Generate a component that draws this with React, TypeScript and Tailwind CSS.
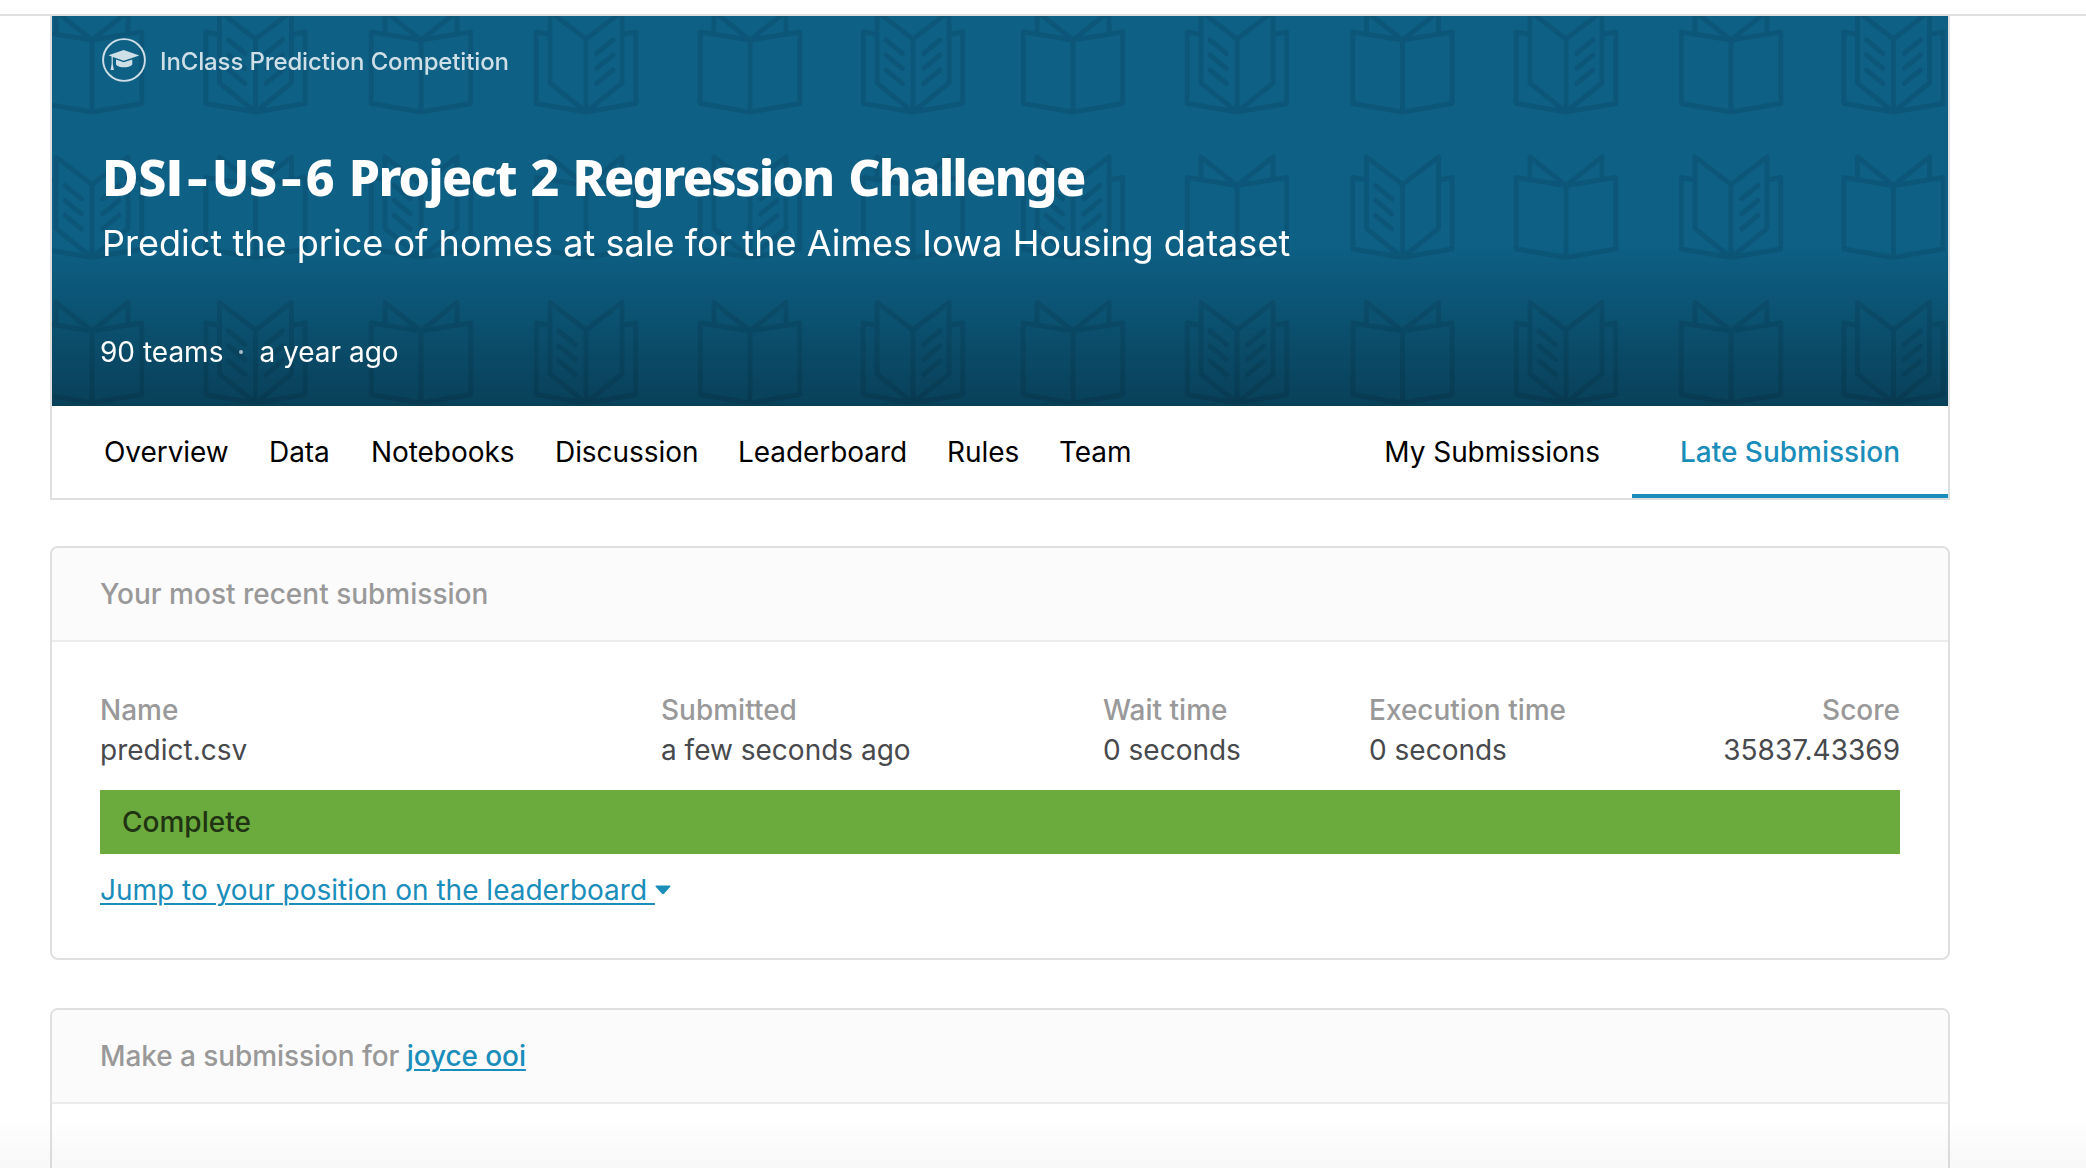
type BookKind = "closed" | "left" | "right" | "both";

const columns = [92, 255.5, 421, 586, 750, 913, 1073, 1237, 1402.5, 1566, 1731, 1893.5];

const rows: { bottom: number; kinds: BookKind[] }[] = [
  { bottom: 112, kinds: ["closed", "both", "closed", "right", "closed", "both", "closed", "left", "closed", "right", "closed", "both"] },
  { bottom: 257.5, kinds: ["both", "closed", "left", "closed", "right", "closed", "both", "closed", "left", "closed", "right", "closed"] },
  { bottom: 403, kinds: ["closed", "both", "closed", "left", "closed", "right", "closed", "both", "closed", "left", "closed", "right"] },
];

const CLOSED =
  "M-49.7 -80L0 -72L49.7 -80V-8.5L0 0L-49.7 -8.5ZM0 -72V0M-36 -78V-100.5L0 -72L36 -100.5V-78";
const OPEN =
  "M-36 -77.5L-49.7 -80V-8.5L0 0L49.7 -8.5V-80L36 -77.5M-36 -100.5L0 -73L36 -100.5V-29L0 0L-36 -29ZM0 -73V0";
const RIGHT_LINES = "M10.5 -58.5L27 -72M10.5 -43.5L27 -57M10.5 -28.5L27 -42";
const LEFT_LINES = "M-10.5 -58.5L-27 -72M-10.5 -43.5L-27 -57M-10.5 -28.5L-27 -42";

function BookPattern() {
  return (
    <svg className="absolute inset-0 h-full w-full" viewBox="52 16 1896 390" fill="none">
      <g stroke="#000" strokeWidth="5" strokeLinejoin="round" strokeLinecap="round" opacity="0.09">
        {rows.map((row) =>
          row.kinds.map((kind, i) => (
            <g key={`${row.bottom}-${i}`} transform={`translate(${columns[i]} ${row.bottom})`}>
              <path d={kind === "closed" ? CLOSED : OPEN} />
              {(kind === "left" || kind === "both") && <path d={LEFT_LINES} />}
              {(kind === "right" || kind === "both") && <path d={RIGHT_LINES} />}
            </g>
          )),
        )}
      </g>
    </svg>
  );
}

function InClassIcon() {
  return (
    <svg className="h-11 w-11" viewBox="0 0 44 44" fill="#cfdfe7">
      <circle cx="22" cy="22" r="20.9" fill="none" stroke="#cfdfe7" strokeWidth="1.9" />
      <path d="M6.5 17.3L21.7 12L37.3 17.4L21.7 22.7L10.8 19.1V26L11.9 32H8.6L9.6 26V18.4Z" />
      <path d="M14 21.6L21.7 24.3L30.3 21.6V26.4C28.5 28.6 25 29.3 22 29.3C19 29.3 15.8 28.6 14 26.4Z" />
    </svg>
  );
}

function Hyphen() {
  return <span className="inline-block w-[29px] scale-x-130 text-center tracking-normal">-</span>;
}

const tabs = [
  { label: "Overview", className: "w-[165px]" },
  { label: "Data", className: "w-[102px]" },
  { label: "Notebooks", className: "w-[184px]" },
  { label: "Discussion", className: "w-[183px]" },
  { label: "Leaderboard", className: "w-[209px]" },
  { label: "Rules", className: "w-[112px]" },
  { label: "Team", className: "w-[100px]" },
];

const details = [
  { label: "Name", value: "predict.csv", className: "w-[561px]" },
  { label: "Submitted", value: "a few seconds ago", className: "w-[442px]" },
  { label: "Wait time", value: "0 seconds", className: "w-[266px]" },
  { label: "Execution time", value: "0 seconds", className: "w-[300px]" },
  { label: "Score", value: "35837.43369", className: "ml-auto text-right" },
];

export default function App() {
  return (
    <div className="relative h-[1168px] w-[2086px] overflow-hidden bg-white font-['Inter',sans-serif] text-[28px] leading-10 whitespace-nowrap">
      <div className="h-4 border-b-2 border-[#dedfe0]" />
      <main className="ml-[50px] w-[1900px]">
        <section className="border-x-2 border-b-2 border-[#dedfe0]">
          <header className="relative h-[390px] overflow-hidden bg-[#0e6085]">
            <BookPattern />
            <div className="absolute inset-x-0 bottom-0 h-[160px] bg-linear-to-b from-transparent to-black/33" />
            <div className="relative flex h-full flex-col pt-[22px] pl-[50px] text-white">
              <div className="flex h-11 items-center gap-[14px] text-2xl text-[#cfdfe7]">
                <InClassIcon />
                <span className="pt-[3px] font-[450] tracking-[-0.13px]">InClass Prediction Competition</span>
              </div>
              <h1 className="mt-[63px] h-16 font-['Noto_Sans',sans-serif] text-[50px] leading-[64px] font-extrabold tracking-[-1.75px] [word-spacing:3.5px]">
                <span className="tracking-[-0.5px]">
                  DS<span className="font-['Open_Sans',sans-serif]">I</span>
                  <Hyphen />US<Hyphen />6
                </span>{" "}
                Project 2 Regression Challenge
              </h1>
              <p className="mt-[10px] text-[36px] leading-[48px] font-[420] tracking-[0.03px]">
                Predict the price of homes at sale for the Aimes Iowa Housing dataset
              </p>
              <div className="mt-[65px] -ml-0.5 flex items-center font-[420]">
                <span>90 teams</span>
                <span className="ml-4 h-1 w-1 rounded-full bg-[#a7bdc9]" />
                <span className="ml-4">a year ago</span>
              </div>
            </div>
          </header>
          <nav className="flex h-[92px] items-stretch pl-[52px] tracking-[-0.06px] text-black">
            {tabs.map((tab) => (
              <a key={tab.label} className={`flex items-center ${tab.className}`}>
                {tab.label}
              </a>
            ))}
            <a className="ml-auto flex items-center pr-8">My Submissions</a>
            <a className="flex w-[316px] items-center justify-end border-b-4 border-[#1a8dba] pt-1 pr-12 font-medium tracking-normal text-[#1a8dba]">
              Late Submission
            </a>
          </nav>
        </section>

        <section className="mt-[46px] overflow-hidden rounded-lg border-2 border-[#dedfe0]">
          <h2 className="flex h-[94px] items-center border-b-2 border-[#ebecec] bg-[#fbfbfb] px-12 font-medium text-[#999]">
            Your most recent submission
          </h2>
          <div className="px-12 py-12">
            <dl className="flex">
              {details.map((d) => (
                <div key={d.label} className={d.className}>
                  <dt className="font-medium text-[#999]">{d.label}</dt>
                  <dd className="text-[#47494d]">{d.value}</dd>
                </div>
              ))}
            </dl>
            <div className="mt-5 flex h-16 items-center bg-[#6bab3d] pl-[22px] font-medium text-[#203312]">
              Complete
            </div>
            <div className="mt-4 flex items-center text-[#1a8dba]">
              <a className="whitespace-pre underline decoration-2 underline-offset-3">Jump to your position on the leaderboard </a>
              <svg className="h-[10px] w-4" viewBox="0 0 16 10" fill="currentColor">
                <path d="M1.2 0.5H14.8Q16 0.8 15.3 1.8L9.2 8.5Q8 9.8 6.8 8.5L0.7 1.8Q0 0.8 1.2 0.5Z" />
              </svg>
            </div>
          </div>
        </section>

        <section className="mt-12 h-[200px] overflow-hidden rounded-lg border-2 border-[#dedfe0]">
          <h2 className="flex h-[94px] items-center border-b-2 border-[#ebecec] bg-[#fbfbfb] px-12 font-medium tracking-[-0.08px] whitespace-pre text-[#999]">
            Make a submission for <a className="text-[#1a8dba] underline decoration-2 underline-offset-3">joyce ooi</a>
          </h2>
        </section>
      </main>
      <div className="absolute inset-x-0 bottom-0 h-[52px] bg-linear-to-b from-transparent to-black/3" />
    </div>
  );
}
